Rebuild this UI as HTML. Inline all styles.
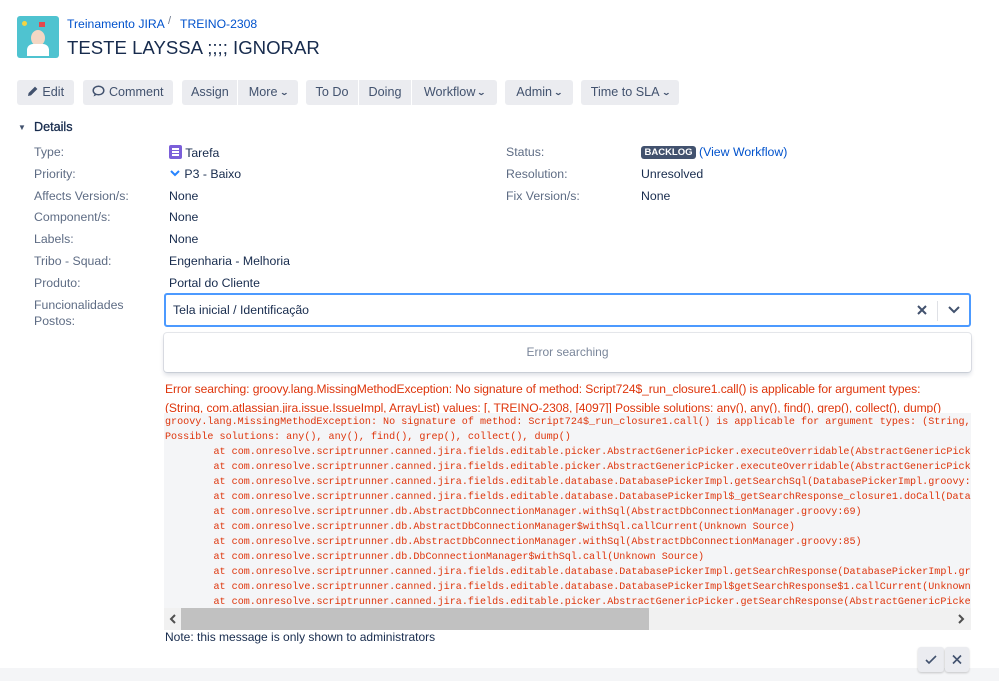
<!DOCTYPE html>
<html><head><meta charset="utf-8"><style>
*{box-sizing:border-box;margin:0;padding:0}
body{width:999px;height:681px;overflow:hidden;background:#fff;font-family:"Liberation Sans",sans-serif;color:#172b4d;font-size:12.3px;position:relative}
.abs{position:absolute;white-space:nowrap}
a{color:#0052cc;text-decoration:none}
.btn{position:absolute;top:80px;height:25px;background:#ebecf0;border-radius:3px;color:#42526e;font-size:12.6px;line-height:25px;padding:0 9px;white-space:nowrap;text-align:center}
.btn span{display:inline-block;transform:scaleX(1.4);font-weight:bold;font-size:8px;vertical-align:1px;margin-left:3px}
.lbl{position:absolute;left:34px;color:#5e6c84;font-size:12.3px;white-space:nowrap}
.val{position:absolute;left:169px;font-size:12.3px;white-space:nowrap}
pre{font-family:"Liberation Mono",monospace;font-size:10.1px;line-height:15px;color:#de350b;tab-size:8}
</style></head><body>
<div class="abs" style="left:17px;top:16px;width:42px;height:42px;background:#4fc3d0;border-radius:3px;overflow:hidden">
<div style="position:absolute;left:14px;top:14px;width:14px;height:16px;background:#f3d7c4;border-radius:50%"></div>
<div style="position:absolute;left:10px;top:28px;width:22px;height:12px;background:#fff;border-radius:6px 6px 0 0"></div>
<div style="position:absolute;left:5px;top:5px;width:5px;height:5px;background:#f5d442;border-radius:50%"></div>
<div style="position:absolute;left:22px;top:6px;width:6px;height:5px;background:#e5484d"></div>
</div>
<a class="abs" style="left:67px;top:17px;font-size:12.2px">Treinamento JIRA</a>
<span class="abs" style="left:168px;top:15px;color:#6b778c;font-size:11px">/</span>
<a class="abs" style="left:180px;top:17px;font-size:12.2px">TREINO-2308</a>
<div class="abs" style="left:67px;top:37px;font-size:18.6px">TESTE LAYSSA ;;;; IGNORAR</div>

<div class="btn" style="left:17px;width:57px"><svg width="12" height="12" viewBox="0 0 12 12" style="vertical-align:-1px"><path d="M1 11l.6-3L8 1.6l2.4 2.4L4 10.4z" fill="#42526e"/></svg> Edit</div>
<div class="btn" style="left:83px;width:90px"><svg width="13" height="12" viewBox="0 0 13 12" style="vertical-align:-1px"><ellipse cx="6.5" cy="5.5" rx="5.3" ry="4.3" fill="none" stroke="#42526e" stroke-width="1.5"/><path d="M2.5 9l-1 2.5 3-1.5" fill="#42526e"/></svg> Comment</div>
<div class="btn" style="left:182px;width:55px;border-radius:3px 0 0 3px">Assign</div>
<div class="btn" style="left:238px;width:60px;border-radius:0 3px 3px 0">More<span>&#8964;</span></div>
<div class="btn" style="left:306px;width:52px;border-radius:3px 0 0 3px">To Do</div>
<div class="btn" style="left:359px;width:52px;border-radius:0">Doing</div>
<div class="btn" style="left:412px;width:85px;border-radius:0 3px 3px 0">Workflow<span>&#8964;</span></div>
<div class="btn" style="left:505px;width:68px">Admin<span>&#8964;</span></div>
<div class="btn" style="left:581px;width:98px">Time to SLA<span>&#8964;</span></div>

<div class="abs" style="left:18px;top:123px;font-size:8px;color:#42526e">&#9660;</div>
<div class="abs" style="left:34px;top:120px;font-size:12.6px;-webkit-text-stroke:.3px #172b4d">Details</div>

<div class="lbl" style="top:145px">Type:</div>
<div class="lbl" style="top:167px">Priority:</div>
<div class="lbl" style="top:189px">Affects Version/s:</div>
<div class="lbl" style="top:210px">Component/s:</div>
<div class="lbl" style="top:232px">Labels:</div>
<div class="lbl" style="top:254px">Tribo - Squad:</div>
<div class="lbl" style="top:276px">Produto:</div>
<div class="lbl" style="top:297px;line-height:16px">Funcionalidades<br>Postos:</div>

<div class="val" style="top:145px"><span style="display:inline-block;width:13px;height:14px;background:#7b5fd9;border-radius:2px;vertical-align:-2px;position:relative"><span style="position:absolute;left:3px;top:3px;width:7px;height:1.5px;background:#fff;box-shadow:0 3px #fff,0 6px #fff"></span></span> Tarefa</div>
<div class="val" style="top:167px"><svg width="12" height="10" viewBox="0 0 12 10" style="vertical-align:0"><path d="M2 3l4 4 4-4" fill="none" stroke="#2684ff" stroke-width="2"/></svg> P3 - Baixo</div>
<div class="val" style="top:189px">None</div>
<div class="val" style="top:210px">None</div>
<div class="val" style="top:232px">None</div>
<div class="val" style="top:254px">Engenharia - Melhoria</div>
<div class="val" style="top:276px">Portal do Cliente</div>

<div class="lbl" style="left:506px;top:145px">Status:</div>
<div class="lbl" style="left:506px;top:167px">Resolution:</div>
<div class="lbl" style="left:506px;top:189px">Fix Version/s:</div>
<div class="abs" style="left:641px;top:146px;background:#42526e;color:#fff;font-size:9.5px;font-weight:bold;padding:1px 0;border-radius:3px;width:55px;text-align:center">BACKLOG</div>
<a class="abs" style="left:699px;top:145px">(View Workflow)</a>
<div class="abs" style="left:641px;top:167px">Unresolved</div>
<div class="abs" style="left:641px;top:189px">None</div>

<div class="abs" style="left:164px;top:293px;width:807px;height:34px;border:2px solid #4c9aff;border-radius:3px;background:#fff"></div>
<div class="abs" style="left:173px;top:303px">Tela inicial / Identificação</div>
<svg class="abs" style="left:916px;top:304px" width="12" height="12" viewBox="0 0 12 12"><path d="M2 2l8 8M10 2l-8 8" stroke="#42526e" stroke-width="2"/></svg>
<div class="abs" style="left:937px;top:301px;width:1px;height:20px;background:#dfe1e6"></div>
<svg class="abs" style="left:947px;top:305px" width="14" height="10" viewBox="0 0 14 10"><path d="M2 2l5 5 5-5" fill="none" stroke="#42526e" stroke-width="2"/></svg>
<div class="abs" style="left:164px;top:333px;width:807px;height:39px;border-radius:3px;box-shadow:0 0 0 1px rgba(9,30,66,.1),0 3px 5px rgba(9,30,66,.15);background:#fff;text-align:center;line-height:39px;color:#7a869a;font-size:12px">Error searching</div>

<div class="abs" style="left:165px;top:380px;color:#de350b;font-size:12.1px;line-height:18.5px;white-space:normal;width:785px;letter-spacing:-0.1px">Error searching: groovy.lang.MissingMethodException: No signature of method: Script724$_run_closure1.call() is applicable for argument types: (String, com.atlassian.jira.issue.IssueImpl, ArrayList) values: [, TREINO-2308, [4097]] Possible solutions: any(), any(), find(), grep(), collect(), dump() <b>&#187;</b></div>
<div class="abs" style="left:164px;top:413px;width:807px;height:217px;background:#f4f5f7;overflow:hidden">
<pre style="padding:2px 0 0 1px">groovy.lang.MissingMethodException: No signature of method: Script724$_run_closure1.call() is applicable for argument types: (String, com.atlassian.jira
Possible solutions: any(), any(), find(), grep(), collect(), dump()
	at com.onresolve.scriptrunner.canned.jira.fields.editable.picker.AbstractGenericPicker.executeOverridable(AbstractGenericPicker.groovy:1
	at com.onresolve.scriptrunner.canned.jira.fields.editable.picker.AbstractGenericPicker.executeOverridable(AbstractGenericPicker.groovy:1
	at com.onresolve.scriptrunner.canned.jira.fields.editable.database.DatabasePickerImpl.getSearchSql(DatabasePickerImpl.groovy:280)
	at com.onresolve.scriptrunner.canned.jira.fields.editable.database.DatabasePickerImpl$_getSearchResponse_closure1.doCall(DatabasePick
	at com.onresolve.scriptrunner.db.AbstractDbConnectionManager.withSql(AbstractDbConnectionManager.groovy:69)
	at com.onresolve.scriptrunner.db.AbstractDbConnectionManager$withSql.callCurrent(Unknown Source)
	at com.onresolve.scriptrunner.db.AbstractDbConnectionManager.withSql(AbstractDbConnectionManager.groovy:85)
	at com.onresolve.scriptrunner.db.DbConnectionManager$withSql.call(Unknown Source)
	at com.onresolve.scriptrunner.canned.jira.fields.editable.database.DatabasePickerImpl.getSearchResponse(DatabasePickerImpl.groovy:11
	at com.onresolve.scriptrunner.canned.jira.fields.editable.database.DatabasePickerImpl$getSearchResponse$1.callCurrent(Unknown Source)
	at com.onresolve.scriptrunner.canned.jira.fields.editable.picker.AbstractGenericPicker.getSearchResponse(AbstractGenericPicker.groovy:
</pre>
<div style="position:absolute;left:0;top:195px;width:807px;height:22px;background:#f1f1f1"></div>
<div style="position:absolute;left:17px;top:195px;width:468px;height:22px;background:#c1c1c1"></div>
<svg style="position:absolute;left:5px;top:201px" width="8" height="10" viewBox="0 0 8 10"><path d="M6 1L2 5l4 4" fill="none" stroke="#505050" stroke-width="2"/></svg>
<svg style="position:absolute;right:6px;top:201px" width="8" height="10" viewBox="0 0 8 10"><path d="M2 1l4 4-4 4" fill="none" stroke="#505050" stroke-width="2"/></svg>
</div>
<div class="abs" style="left:165px;top:630px;font-size:12px">Note: this message is only shown to administrators</div>
<div class="abs" style="left:0;top:668px;width:999px;height:13px;background:#f4f5f7"></div>
<div class="abs" style="left:918px;top:647px;width:26px;height:25px;background:#ebecf0;border-radius:3px;box-shadow:0 1px 2px rgba(0,0,0,.2)"><svg width="26" height="25" viewBox="0 0 26 25"><path d="M8 13l3 3 7-7" fill="none" stroke="#42526e" stroke-width="1.6"/></svg></div>
<div class="abs" style="left:945px;top:647px;width:24px;height:25px;background:#ebecf0;border-radius:3px;box-shadow:0 1px 2px rgba(0,0,0,.2)"><svg width="24" height="25" viewBox="0 0 24 25"><path d="M8 8.5l8 8M16 8.5l-8 8" stroke="#42526e" stroke-width="1.6"/></svg></div>
</body></html>
